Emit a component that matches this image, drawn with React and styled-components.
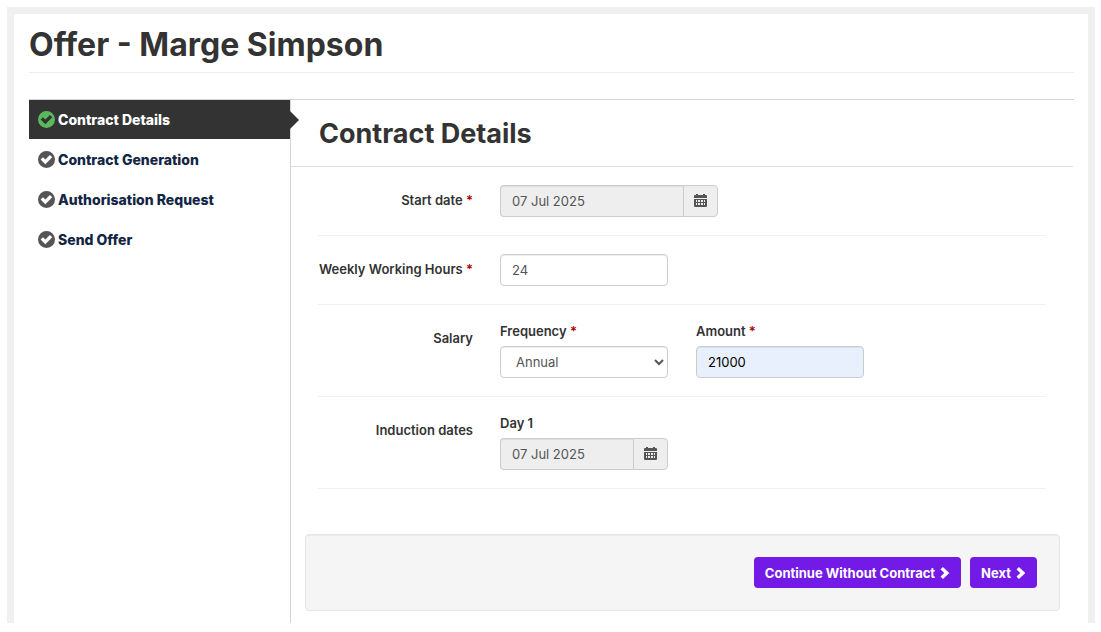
import React, { useState } from "react";
import styled, { createGlobalStyle } from "styled-components";

const GlobalStyle = createGlobalStyle`
  *, *::before, *::after {
    box-sizing: border-box;
  }

  body {
    margin: 0;
    background: #fff;
    color: #333;
    font-family: Inter, "Liberation Sans", sans-serif;
    font-size: 13px;
    line-height: 18px;
  }

  button, input, select {
    font-family: inherit;
    font-size: inherit;
  }
`;

const Page = styled.div`
  display: flex;
  flex-direction: column;
  min-height: calc(100vh - 16px);
  margin: 7px 6px 9px 7px;
  padding: 0 14px 0 15px;
  border: 7px solid #f0f0f0;
  border-bottom: 0;
`;

const PageTitle = styled.h1`
  margin: 0 0 26px;
  padding: 11px 0 7px;
  border-bottom: 1px solid #eee;
  font-size: 32px;
  font-weight: 700;
  line-height: 40px;
`;

const Wizard = styled.div`
  display: grid;
  grid-template-columns: 262px minmax(0, 1fr);
  flex: 1;
  border-top: 1px solid #d5d5d5;
`;

const Steps = styled.ul`
  display: flex;
  flex-direction: column;
  gap: 1px;
  margin: 0;
  padding: 0;
  border-right: 1px solid #d5d5d5;
  list-style: none;
`;

const StepLink = styled.a`
  position: relative;
  display: flex;
  align-items: center;
  gap: 3px;
  height: 39px;
  padding-left: 9px;
  background: ${props => props.$active ? "#333" : "transparent"};
  color: ${props => props.$active ? "#fff" : "#132544"};
  font-size: 14px;
  font-weight: 800;
  text-decoration: none;

  svg {
    color: ${props => props.$active ? "#5cb85c" : "#555"};
  }

  &::after {
    content: "";
    display: ${props => props.$active ? "block" : "none"};
    position: absolute;
    left: 100%;
    border: 9px solid transparent;
    border-left-color: #333;
    border-right: 0;
  }
`;

const Content = styled.main`
  padding-bottom: 12px;
`;

const ContentTitle = styled.h2`
  margin: 0 1px 0 0;
  padding: 17px 28px 15px;
  border-bottom: 1px solid #ddd;
  font-size: 27px;
  font-weight: 700;
  line-height: 34px;
`;

const Rows = styled.div`
  padding: 0 28px 0 27px;
`;

const Row = styled.div`
  display: grid;
  grid-template-columns: 155px minmax(0, 1fr);
  column-gap: 27px;
  padding: 18px 0;
  border-bottom: 1px solid #f0f0f0;
`;

const RowLabel = styled.label`
  line-height: 30px;
  font-weight: 600;
  text-align: right;
  white-space: nowrap;
`;

const Fields = styled.div`
  display: flex;
  flex-wrap: wrap;
  gap: 28px;
`;

const Field = styled.div`
  width: ${props => props.$wide ? "218px" : "168px"};
`;

const FieldLabel = styled.label`
  display: block;
  margin-bottom: 7px;
  font-weight: 600;
  line-height: 16px;
`;

const Required = styled.span`
  color: #a80000;
`;

const Input = styled.input`
  display: block;
  width: 100%;
  min-width: 0;
  height: 32px;
  padding: 0 11px;
  border: 1px solid #ccc;
  border-radius: 4px;
  background: ${props => props.$filled ? "#e8f0fe" : "#fff"};
  box-shadow: inset 0 1px 1px rgba(0, 0, 0, 0.07);
  color: ${props => props.$filled ? "#000" : "#555"};
`;

const Select = styled.select`
  display: block;
  width: 100%;
  height: 32px;
  padding: 0 0 0 11px;
  border: 1px solid #ccc;
  border-radius: 4px;
  background: #fff;
  box-shadow: inset 0 1px 1px rgba(0, 0, 0, 0.07);
  color: #555;
`;

const DateGroup = styled.div`
  display: flex;

  ${Input} {
    flex: 1;
    border-right: 0;
    border-radius: 4px 0 0 4px;
    background: #eee;
  }
`;

const DateButton = styled.button`
  display: flex;
  align-items: center;
  justify-content: center;
  width: 35px;
  height: 32px;
  padding: 0;
  border: 1px solid #ccc;
  border-radius: 0 4px 4px 0;
  background: #eee;
  color: #555;
`;

const Actions = styled.div`
  display: flex;
  flex-wrap: wrap;
  justify-content: flex-end;
  gap: 9px;
  margin: 45px 14px 0;
  padding: 22px;
  border: 1px solid #e6e6e6;
  border-radius: 4px;
  background: #f5f5f5;
  box-shadow: inset 0 1px 1px rgba(0, 0, 0, 0.05);
`;

const Button = styled.button`
  display: flex;
  align-items: center;
  gap: 5px;
  height: 31px;
  padding: 0 11px;
  border: 0;
  border-radius: 4px;
  background: #731ae6;
  color: #fff;
  font-weight: 700;
`;

function CheckIcon() {
    return (
        <svg width="17" height="17" viewBox="0 0 17 17" aria-hidden="true">
            <path
                fill="currentColor"
                fillRule="evenodd"
                d="M8.5 0a8.5 8.5 0 1 0 0 17a8.5 8.5 0 0 0 0-17zM2.6 8.6L5 6.2L7.3 8.5L11.9 3.9L14.3 6.3L7.3 13.3z"
            />
        </svg>
    );
}

function CalendarIcon() {
    return (
        <svg width="13" height="14" viewBox="0 0 13 14" aria-hidden="true">
            <path
                fill="currentColor"
                fillRule="evenodd"
                d="M2 0h2v1h5V0h2v1h1q1 0 1 1v2H0V2q0-1 1-1h1zM0 5h13v7q0 1-1 1H1q-1 0-1-1zM2 6v2h1V6zM4 6v2h2V6zM7 6v2h2V6zM10 6v2h1V6zM2 9v2h1V9zM4 9v2h2V9zM7 9v2h2V9zM10 9v2h1V9z"
            />
        </svg>
    );
}

function ChevronIcon() {
    return (
        <svg width="10" height="12" viewBox="0 0 10 12" aria-hidden="true">
            <path fill="currentColor" d="M.5 2.4L2.9 0L9.3 6L2.9 12L.5 9.6L4.3 6z" />
        </svg>
    );
}

function DateInput({id, value}) {
    return (
        <DateGroup>
            <Input id={id} value={value} readOnly />
            <DateButton type="button" aria-label="Choose date">
                <CalendarIcon />
            </DateButton>
        </DateGroup>
    );
}

const steps = ["Contract Details", "Contract Generation", "Authorisation Request", "Send Offer"];

function App() {
    const [active, setActive] = useState(0);
    const [hours, setHours] = useState("24");
    const [frequency, setFrequency] = useState("Annual");
    const [amount, setAmount] = useState("21000");

    //handle step links
    const stepHandler = (e, index) => {
        e.preventDefault();
        setActive(index);
    };

    return (
        <>
            <GlobalStyle />
            <Page>
                <PageTitle>Offer - Marge Simpson</PageTitle>
                <Wizard>
                    <Steps>
                        {steps.map((step, index) => (
                            <li key={step}>
                                <StepLink href="#" $active={index === active} onClick={(e) => stepHandler(e, index)}>
                                    <CheckIcon />
                                    {step}
                                </StepLink>
                            </li>
                        ))}
                    </Steps>
                    <Content>
                        <ContentTitle>Contract Details</ContentTitle>
                        <form onSubmit={(e) => e.preventDefault()}>
                            <Rows>
                                <Row>
                                    <RowLabel htmlFor="start-date">Start date <Required>*</Required></RowLabel>
                                    <Field $wide>
                                        <DateInput id="start-date" value="07 Jul 2025" />
                                    </Field>
                                </Row>
                                <Row>
                                    <RowLabel htmlFor="hours">Weekly Working Hours <Required>*</Required></RowLabel>
                                    <Field>
                                        <Input id="hours" value={hours} onChange={(e) => setHours(e.target.value)} />
                                    </Field>
                                </Row>
                                <Row>
                                    <RowLabel as="span">Salary</RowLabel>
                                    <Fields>
                                        <Field>
                                            <FieldLabel htmlFor="frequency">Frequency <Required>*</Required></FieldLabel>
                                            <Select id="frequency" value={frequency} onChange={(e) => setFrequency(e.target.value)}>
                                                <option>Annual</option>
                                                <option>Monthly</option>
                                                <option>Hourly</option>
                                            </Select>
                                        </Field>
                                        <Field>
                                            <FieldLabel htmlFor="amount">Amount <Required>*</Required></FieldLabel>
                                            <Input id="amount" $filled value={amount} onChange={(e) => setAmount(e.target.value)} />
                                        </Field>
                                    </Fields>
                                </Row>
                                <Row>
                                    <RowLabel as="span">Induction dates</RowLabel>
                                    <Field>
                                        <FieldLabel htmlFor="day-1">Day 1</FieldLabel>
                                        <DateInput id="day-1" value="07 Jul 2025" />
                                    </Field>
                                </Row>
                            </Rows>
                            <Actions>
                                <Button type="button">Continue Without Contract <ChevronIcon /></Button>
                                <Button type="submit">Next <ChevronIcon /></Button>
                            </Actions>
                        </form>
                    </Content>
                </Wizard>
            </Page>
        </>
    );
}

export default App;
